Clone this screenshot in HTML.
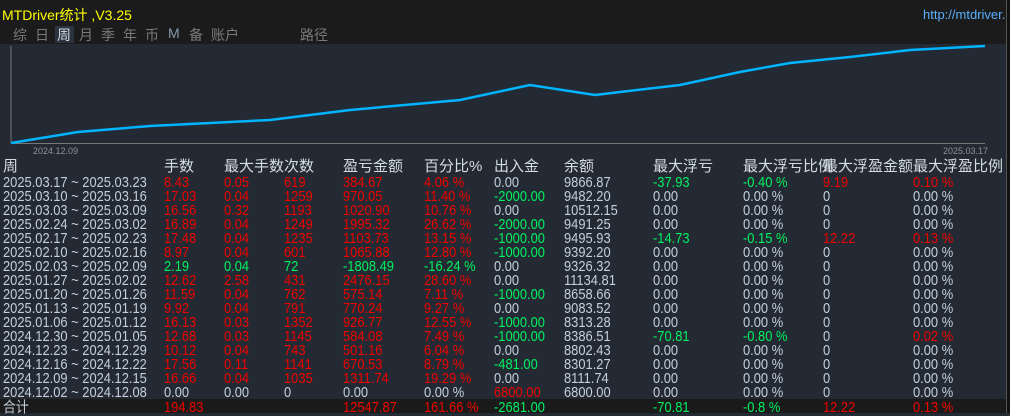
<!DOCTYPE html>
<html><head><meta charset="utf-8"><style>
body{margin:0;width:1010px;height:413px;background:#232a33;overflow:hidden;position:relative;font-family:"Liberation Sans","Noto Sans CJK SC",sans-serif;font-size:13px;color:#c3cfdb}
.top{position:absolute;left:0;top:0;width:1006px;height:44px;background:#1b1b1b}
.strip{position:absolute;left:0;top:0;width:1010px;height:3px;background:#111}
.title{position:absolute;left:2px;top:5px;color:#ffff00;font-size:14px}
.url{position:absolute;left:923px;top:7px;color:#5aaeff;font-size:13px;white-space:nowrap}
.tab{position:absolute;top:25px;color:#7a7a7a;font-size:14px}
.r{position:absolute;left:0;width:1006px;height:14px;line-height:14px}
.r span{position:absolute;white-space:nowrap;font-size:15px;transform:scaleX(.86);transform-origin:left center}
.h span{font-size:15px;transform:none}
.R{color:#f00000}.G{color:#00f060}
.tot{position:absolute;left:0;top:399px;width:1006px;height:14px;background:#1a1a1a}
.rb{position:absolute;left:1006px;top:0;width:4px;height:413px;background:#111;border-left:1px solid #555}
</style></head><body>
<div class="strip"></div>
<div class="top"></div>
<div class="title">MTDriver统计 ,V3.25</div>
<div class="url">http://mtdriver.c</div>
<div style="position:absolute;left:55px;top:26px;width:19px;height:17px;background:#2a3440"></div>
<span class="tab" style="left:13px">综</span><span class="tab" style="left:35px">日</span><span class="tab" style="left:57px;color:#d0d8e0">周</span><span class="tab" style="left:79px">月</span><span class="tab" style="left:101px">季</span><span class="tab" style="left:123px">年</span><span class="tab" style="left:145px">币</span><span class="tab" style="left:168px;color:#8898aa">M</span><span class="tab" style="left:189px">备</span><span class="tab" style="left:211px">账户</span><span class="tab" style="left:300px">路径</span>
<svg style="position:absolute;left:0;top:44px" width="1006" height="110">
<line x1="11" y1="2" x2="11" y2="99" stroke="#777" stroke-width="1"/>
<line x1="11" y1="99.5" x2="985" y2="99.5" stroke="#777" stroke-width="1"/>
<polyline fill="none" stroke="#00b4ff" stroke-width="2.5" points="11,99 78,88 150,82 270,76 350,66 460,56 530,41 595,51 680,41 740,28 790,19 850,13 910,6 985,2"/>
<text x="33" y="110" fill="#8a929c" font-size="9" font-family="Liberation Sans">2024.12.09</text>
<text x="943" y="110" fill="#8a929c" font-size="9" font-family="Liberation Sans">2025.03.17</text>
</svg>
<div class="r h" style="top:160px;color:#d4dce4"><span style="left:3px">周</span><span style="left:164px">手数</span><span style="left:224px">最大手数次数</span><span style="left:343px">盈亏金额</span><span style="left:424px">百分比%</span><span style="left:494px">出入金</span><span style="left:564px">余额</span><span style="left:653px">最大浮亏</span><span style="left:743px">最大浮亏比例</span><span style="left:823px">最大浮盈金额</span><span style="left:913px">最大浮盈比例</span></div>

<div class="r" style="top:176px"><span style="left:3px">2025.03.17 ~ 2025.03.23</span><span class="R" style="left:164px">8.43</span><span class="R" style="left:224px">0.05</span><span class="R" style="left:284px">619</span><span class="R" style="left:343px">384.67</span><span class="R" style="left:424px">4.06 %</span><span style="left:494px">0.00</span><span style="left:564px">9866.87</span><span class="G" style="left:653px">-37.93</span><span class="G" style="left:743px">-0.40 %</span><span class="R" style="left:823px">9.19</span><span class="R" style="left:913px">0.10 %</span></div>
<div class="r" style="top:190px"><span style="left:3px">2025.03.10 ~ 2025.03.16</span><span class="R" style="left:164px">17.03</span><span class="R" style="left:224px">0.04</span><span class="R" style="left:284px">1259</span><span class="R" style="left:343px">970.05</span><span class="R" style="left:424px">11.40 %</span><span class="G" style="left:494px">-2000.00</span><span style="left:564px">9482.20</span><span style="left:653px">0.00</span><span style="left:743px">0.00 %</span><span style="left:823px">0</span><span style="left:913px">0.00 %</span></div>
<div class="r" style="top:204px"><span style="left:3px">2025.03.03 ~ 2025.03.09</span><span class="R" style="left:164px">16.56</span><span class="R" style="left:224px">0.32</span><span class="R" style="left:284px">1193</span><span class="R" style="left:343px">1020.90</span><span class="R" style="left:424px">10.76 %</span><span style="left:494px">0.00</span><span style="left:564px">10512.15</span><span style="left:653px">0.00</span><span style="left:743px">0.00 %</span><span style="left:823px">0</span><span style="left:913px">0.00 %</span></div>
<div class="r" style="top:218px"><span style="left:3px">2025.02.24 ~ 2025.03.02</span><span class="R" style="left:164px">16.89</span><span class="R" style="left:224px">0.04</span><span class="R" style="left:284px">1249</span><span class="R" style="left:343px">1995.32</span><span class="R" style="left:424px">26.62 %</span><span class="G" style="left:494px">-2000.00</span><span style="left:564px">9491.25</span><span style="left:653px">0.00</span><span style="left:743px">0.00 %</span><span style="left:823px">0</span><span style="left:913px">0.00 %</span></div>
<div class="r" style="top:232px"><span style="left:3px">2025.02.17 ~ 2025.02.23</span><span class="R" style="left:164px">17.48</span><span class="R" style="left:224px">0.04</span><span class="R" style="left:284px">1235</span><span class="R" style="left:343px">1103.73</span><span class="R" style="left:424px">13.15 %</span><span class="G" style="left:494px">-1000.00</span><span style="left:564px">9495.93</span><span class="G" style="left:653px">-14.73</span><span class="G" style="left:743px">-0.15 %</span><span class="R" style="left:823px">12.22</span><span class="R" style="left:913px">0.13 %</span></div>
<div class="r" style="top:246px"><span style="left:3px">2025.02.10 ~ 2025.02.16</span><span class="R" style="left:164px">8.97</span><span class="R" style="left:224px">0.04</span><span class="R" style="left:284px">601</span><span class="R" style="left:343px">1065.88</span><span class="R" style="left:424px">12.80 %</span><span class="G" style="left:494px">-1000.00</span><span style="left:564px">9392.20</span><span style="left:653px">0.00</span><span style="left:743px">0.00 %</span><span style="left:823px">0</span><span style="left:913px">0.00 %</span></div>
<div class="r" style="top:260px"><span style="left:3px">2025.02.03 ~ 2025.02.09</span><span class="G" style="left:164px">2.19</span><span class="G" style="left:224px">0.04</span><span class="G" style="left:284px">72</span><span class="G" style="left:343px">-1808.49</span><span class="G" style="left:424px">-16.24 %</span><span style="left:494px">0.00</span><span style="left:564px">9326.32</span><span style="left:653px">0.00</span><span style="left:743px">0.00 %</span><span style="left:823px">0</span><span style="left:913px">0.00 %</span></div>
<div class="r" style="top:274px"><span style="left:3px">2025.01.27 ~ 2025.02.02</span><span class="R" style="left:164px">12.62</span><span class="R" style="left:224px">2.58</span><span class="R" style="left:284px">431</span><span class="R" style="left:343px">2476.15</span><span class="R" style="left:424px">28.60 %</span><span style="left:494px">0.00</span><span style="left:564px">11134.81</span><span style="left:653px">0.00</span><span style="left:743px">0.00 %</span><span style="left:823px">0</span><span style="left:913px">0.00 %</span></div>
<div class="r" style="top:288px"><span style="left:3px">2025.01.20 ~ 2025.01.26</span><span class="R" style="left:164px">11.59</span><span class="R" style="left:224px">0.04</span><span class="R" style="left:284px">762</span><span class="R" style="left:343px">575.14</span><span class="R" style="left:424px">7.11 %</span><span class="G" style="left:494px">-1000.00</span><span style="left:564px">8658.66</span><span style="left:653px">0.00</span><span style="left:743px">0.00 %</span><span style="left:823px">0</span><span style="left:913px">0.00 %</span></div>
<div class="r" style="top:302px"><span style="left:3px">2025.01.13 ~ 2025.01.19</span><span class="R" style="left:164px">9.92</span><span class="R" style="left:224px">0.04</span><span class="R" style="left:284px">791</span><span class="R" style="left:343px">770.24</span><span class="R" style="left:424px">9.27 %</span><span style="left:494px">0.00</span><span style="left:564px">9083.52</span><span style="left:653px">0.00</span><span style="left:743px">0.00 %</span><span style="left:823px">0</span><span style="left:913px">0.00 %</span></div>
<div class="r" style="top:316px"><span style="left:3px">2025.01.06 ~ 2025.01.12</span><span class="R" style="left:164px">16.13</span><span class="R" style="left:224px">0.03</span><span class="R" style="left:284px">1352</span><span class="R" style="left:343px">926.77</span><span class="R" style="left:424px">12.55 %</span><span class="G" style="left:494px">-1000.00</span><span style="left:564px">8313.28</span><span style="left:653px">0.00</span><span style="left:743px">0.00 %</span><span style="left:823px">0</span><span style="left:913px">0.00 %</span></div>
<div class="r" style="top:330px"><span style="left:3px">2024.12.30 ~ 2025.01.05</span><span class="R" style="left:164px">12.68</span><span class="R" style="left:224px">0.03</span><span class="R" style="left:284px">1145</span><span class="R" style="left:343px">584.08</span><span class="R" style="left:424px">7.49 %</span><span class="G" style="left:494px">-1000.00</span><span style="left:564px">8386.51</span><span class="G" style="left:653px">-70.81</span><span class="G" style="left:743px">-0.80 %</span><span style="left:823px">0</span><span class="R" style="left:913px">0.02 %</span></div>
<div class="r" style="top:344px"><span style="left:3px">2024.12.23 ~ 2024.12.29</span><span class="R" style="left:164px">10.12</span><span class="R" style="left:224px">0.04</span><span class="R" style="left:284px">743</span><span class="R" style="left:343px">501.16</span><span class="R" style="left:424px">6.04 %</span><span style="left:494px">0.00</span><span style="left:564px">8802.43</span><span style="left:653px">0.00</span><span style="left:743px">0.00 %</span><span style="left:823px">0</span><span style="left:913px">0.00 %</span></div>
<div class="r" style="top:358px"><span style="left:3px">2024.12.16 ~ 2024.12.22</span><span class="R" style="left:164px">17.56</span><span class="R" style="left:224px">0.11</span><span class="R" style="left:284px">1141</span><span class="R" style="left:343px">670.53</span><span class="R" style="left:424px">8.79 %</span><span class="G" style="left:494px">-481.00</span><span style="left:564px">8301.27</span><span style="left:653px">0.00</span><span style="left:743px">0.00 %</span><span style="left:823px">0</span><span style="left:913px">0.00 %</span></div>
<div class="r" style="top:372px"><span style="left:3px">2024.12.09 ~ 2024.12.15</span><span class="R" style="left:164px">16.66</span><span class="R" style="left:224px">0.04</span><span class="R" style="left:284px">1035</span><span class="R" style="left:343px">1311.74</span><span class="R" style="left:424px">19.29 %</span><span style="left:494px">0.00</span><span style="left:564px">8111.74</span><span style="left:653px">0.00</span><span style="left:743px">0.00 %</span><span style="left:823px">0</span><span style="left:913px">0.00 %</span></div>
<div class="r" style="top:386px"><span style="left:3px">2024.12.02 ~ 2024.12.08</span><span style="left:164px">0.00</span><span style="left:224px">0.00</span><span style="left:284px">0</span><span style="left:343px">0.00</span><span style="left:424px">0.00 %</span><span class="R" style="left:494px">6800.00</span><span style="left:564px">6800.00</span><span style="left:653px">0.00</span><span style="left:743px">0.00 %</span><span style="left:823px">0</span><span style="left:913px">0.00 %</span></div>
<div class="tot"></div>
<div class="r" style="top:401px"><span style="left:3px">合计</span><span class="R" style="left:164px">194.83</span><span class="R" style="left:343px">12547.87</span><span class="R" style="left:424px">161.66 %</span><span class="G" style="left:494px">-2681.00</span><span class="G" style="left:653px">-70.81</span><span class="G" style="left:743px">-0.8 %</span><span class="R" style="left:823px">12.22</span><span class="R" style="left:913px">0.13 %</span></div>
<div class="rb"></div>
</body></html>
